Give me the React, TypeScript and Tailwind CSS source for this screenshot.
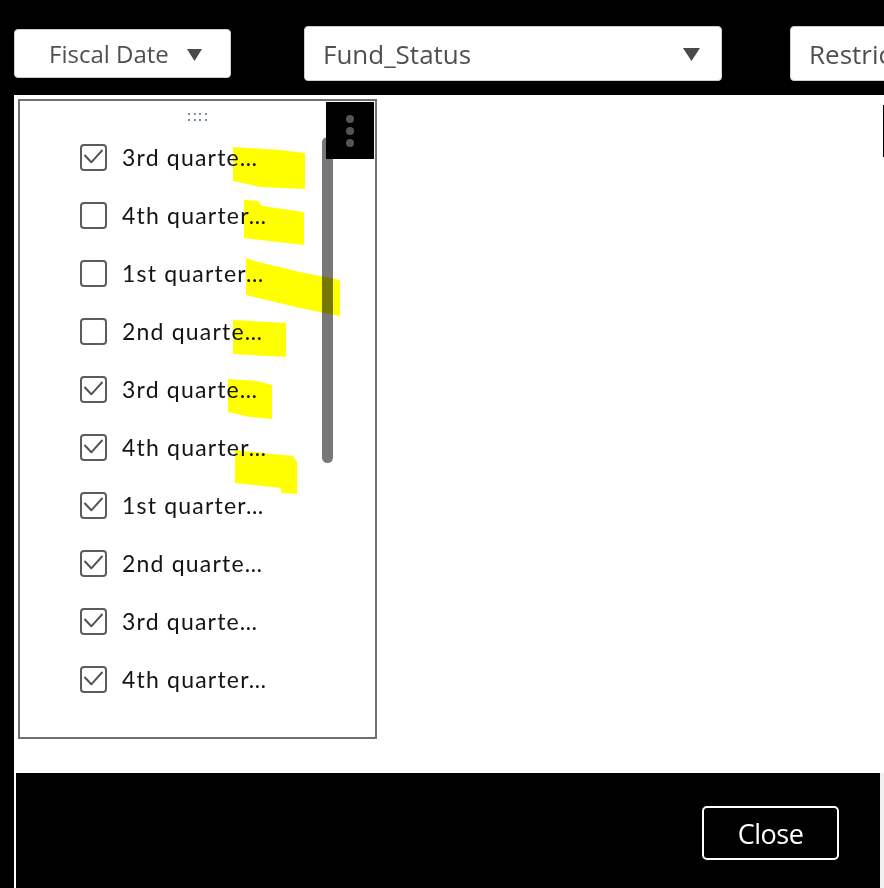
import React from "react";

const rows: { label: string; checked: boolean }[] = [
  { label: "3rd quarte…", checked: true },
  { label: "4th quarter…", checked: false },
  { label: "1st quarter…", checked: false },
  { label: "2nd quarte…", checked: false },
  { label: "3rd quarte…", checked: true },
  { label: "4th quarter…", checked: true },
  { label: "1st quarter…", checked: true },
  { label: "2nd quarte…", checked: true },
  { label: "3rd quarte…", checked: true },
  { label: "4th quarter…", checked: true },
];

function Caret({ w, h }: { w: number; h: number }) {
  return (
    <svg width={w} height={h} viewBox={`0 0 ${w} ${h}`} className="shrink-0">
      <polygon points={`0,0 ${w},0 ${w / 2},${h}`} fill="#4a4a4a" />
    </svg>
  );
}

function Checkbox({ checked }: { checked: boolean }) {
  return (
    <div className="w-[27px] h-[27px] shrink-0 rounded-[4px] border-2 border-[#5c5c5c] bg-white flex items-center justify-center">
      {checked && (
        <svg width="23" height="23" viewBox="0 0 23 23">
          <path d="M3 9.5 L9.3 16.3 L20 4.5" fill="none" stroke="#555" strokeWidth="2" strokeLinecap="round" strokeLinejoin="round" />
        </svg>
      )}
    </div>
  );
}

export default function App() {
  return (
    <div
      className="relative w-[884px] h-[888px] bg-black overflow-hidden"
      style={{ fontFamily: "'Open Sans', 'Noto Sans', sans-serif" }}
    >
      {/* top bar */}
      <div className="flex items-start h-[95px]">
        <div className="ml-[14px] mt-[29px] w-[217px] h-[49px] shrink-0 bg-white rounded-[4px] border border-[#cfcfcf] flex items-center pl-[34px]">
          <span className="text-[24px] text-[#505050] leading-none">Fiscal Date</span>
          <span className="ml-[18px] mt-[2px]">
            <Caret w={15} h={12} />
          </span>
        </div>
        <div className="ml-[73px] mt-[26px] w-[418px] h-[55px] shrink-0 bg-white rounded-[4px] border border-[#cfcfcf] flex items-center justify-between pl-[18px] pr-[21px]">
          <span className="text-[26px] text-[#505050] leading-none">Fund_Status</span>
          <span className="mt-[2px]">
            <Caret w={17} h={13} />
          </span>
        </div>
        <div className="ml-[68px] mt-[26px] w-[120px] h-[55px] shrink-0 bg-white rounded-[4px] border border-[#cfcfcf] flex items-center pl-[18px] overflow-hidden">
          <span className="text-[26px] text-[#505050] leading-none whitespace-nowrap">Restric</span>
        </div>
      </div>

      {/* body */}
      <div className="flex h-[678px]">
        <div className="w-[14px] shrink-0 bg-black" />
        <div className="w-[868px] shrink-0 bg-white pt-[4px] pl-[4px]">
          <div className="relative w-[359px] h-[640px] border-2 border-[#707070] flex flex-col">
            {/* drag handle */}
            <div className="mt-[12px] flex flex-col items-center gap-[4px]">
              <div className="flex gap-[3.5px]">
                {[0, 1, 2, 3].map((i) => (
                  <div key={i} className="w-[2px] h-[2px] bg-[#7f8ca0]" />
                ))}
              </div>
              <div className="flex gap-[3.5px]">
                {[0, 1, 2, 3].map((i) => (
                  <div key={i} className="w-[2px] h-[2px] bg-[#7f8ca0]" />
                ))}
              </div>
            </div>
            {/* list */}
            <div className="mt-[7px] flex flex-col" style={{ fontFamily: "Lato, 'Open Sans', sans-serif" }}>
              {rows.map((r, i) => (
                <div key={i} className="h-[58px] flex items-center pl-[60px]">
                  <Checkbox checked={r.checked} />
                  <span className="ml-[15px] text-[23px] text-[#141414] whitespace-nowrap tracking-[1.2px] leading-none">
                    {r.label}
                  </span>
                </div>
              ))}
            </div>
            {/* scrollbar */}
            <div className="absolute left-[302px] top-[36px] w-[11px] h-[326px] rounded-full bg-[#787878]" />
            {/* menu button */}
            <div className="absolute left-[306px] top-[1px] w-[48px] h-[57px] bg-black flex flex-col items-center justify-center gap-[4px]">
              <div className="w-[8px] h-[8px] rounded-full bg-[#555]" />
              <div className="w-[8px] h-[8px] rounded-full bg-[#555]" />
              <div className="w-[8px] h-[8px] rounded-full bg-[#555]" />
            </div>
          </div>
        </div>
        <div className="w-[2px] shrink-0 bg-white flex flex-col">
          <div className="h-[10px]" />
          <div className="h-[52px] bg-black w-[1px] ml-[1px]" />
        </div>
      </div>

      {/* footer */}
      <div className="flex h-[115px]">
        <div className="w-[14px] shrink-0 bg-black" />
        <div className="w-[2px] shrink-0 bg-white" />
        <div className="w-[864px] shrink-0 bg-black flex justify-end items-start pt-[33px] pr-[41px]">
          <div className="w-[137px] h-[54px] border-2 border-white rounded-[5px] flex items-center justify-center">
            <span className="text-[27px] text-white leading-none tracking-[-0.5px]">Close</span>
          </div>
        </div>
        <div className="w-[4px] shrink-0 bg-[#f0f0f0]" />
      </div>

      {/* yellow highlighter marks */}
      <svg
        className="absolute left-0 top-0 pointer-events-none mix-blend-multiply"
        width="884"
        height="888"
        viewBox="0 0 884 888"
      >
        <g fill="#ffff00">
          <polygon points="233,147 280,150 305,153 305,189 260,187 233,181" />
          <polygon points="244,200 258,201 262,206 304,212 304,245 244,238" />
          <polygon points="246,258 258,262 300,272 340,280 340,316 300,308 246,295" />
          <polygon points="233,320 286,323 286,357 233,354" />
          <polygon points="228,379 257,381 272,385 272,419 250,417 228,412" />
          <polygon points="235,450 293,456 297,462 297,494 282,493 280,488 235,483" />
        </g>
      </svg>
    </div>
  );
}
